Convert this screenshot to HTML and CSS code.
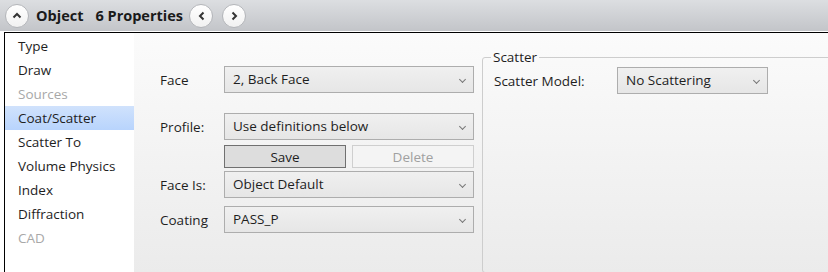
FILE: index.html
```html
<!DOCTYPE html>
<html lang="en">
<head>
  <meta charset="UTF-8" />
  <title>Object Properties</title>
  <link rel="stylesheet" href="styles.css">
</head>
<body>
  <!-- Title Bar -->
  <div class="title-bar">
    <button class="round-btn collapse-btn">
      <svg width="10" height="7" viewBox="0 0 10 7"><path d="M1.5 5.5 L5 2 L8.5 5.5" fill="none" stroke="#333" stroke-width="2"/></svg>
    </button>
    <span class="title">Object</span>
    <span class="title count">6 Properties</span>
    <button class="round-btn nav-btn">
      <svg width="7" height="10" viewBox="0 0 7 10"><path d="M5.5 1.5 L2 5 L5.5 8.5" fill="none" stroke="#333" stroke-width="2"/></svg>
    </button>
    <button class="round-btn nav-btn">
      <svg width="7" height="10" viewBox="0 0 7 10"><path d="M1.5 1.5 L5 5 L1.5 8.5" fill="none" stroke="#333" stroke-width="2"/></svg>
    </button>
  </div>

  <div class="frame">
    <!-- Page list -->
    <ul class="page-list">
      <li>Type</li>
      <li>Draw</li>
      <li class="disabled">Sources</li>
      <li class="selected">Coat/Scatter</li>
      <li>Scatter To</li>
      <li>Volume Physics</li>
      <li>Index</li>
      <li>Diffraction</li>
      <li class="disabled">CAD</li>
    </ul>

    <!-- Page content -->
    <div class="page">
      <div class="face-form">
        <div class="form-row row-face">
          <label>Face</label>
          <div class="select">2, Back Face<span class="chev"></span></div>
        </div>
        <div class="form-row row-profile">
          <label>Profile:</label>
          <div class="select">Use definitions below<span class="chev"></span></div>
        </div>
        <div class="form-row row-buttons">
          <label></label>
          <div class="btn-pair">
            <button class="btn">Save</button>
            <button class="btn" disabled>Delete</button>
          </div>
        </div>
        <div class="form-row row-faceis">
          <label>Face Is:</label>
          <div class="select">Object Default<span class="chev"></span></div>
        </div>
        <div class="form-row row-coating">
          <label>Coating</label>
          <div class="select">PASS_P<span class="chev"></span></div>
        </div>
      </div>

      <fieldset class="scatter-group">
        <legend>Scatter</legend>
        <div class="scatter-row">
          <label>Scatter Model:</label>
          <div class="select scatter-select">No Scattering<span class="chev"></span></div>
        </div>
      </fieldset>
    </div>
  </div>
</body>
</html>
```

FILE: styles.css
```css
/* Basic Reset & Font */
* {
  margin: 0;
  padding: 0;
  box-sizing: border-box;
}
body, button {
  font-family: 'Open Sans', 'Noto Sans', Arial, sans-serif;
}
body {
  width: 828px;
  height: 272px;
  overflow: hidden;
  background: #fff;
  color: #1e1e1e;
  font-size: 13.5px;
}

/* Title Bar */
.title-bar {
  height: 31px;
  display: flex;
  align-items: center;
  padding-left: 5px;
  background: linear-gradient(to bottom, #dcdee1, #c3c5c9);
}
.round-btn {
  width: 24px;
  height: 24px;
  border-radius: 50%;
  border: 1px solid #b4b6ba;
  background: linear-gradient(to bottom, #ffffff, #f1f1f1);
  display: flex;
  align-items: center;
  justify-content: center;
}
.title {
  margin-left: 7px;
  font-size: 14.5px;
  font-weight: 700;
  color: #1a1a1a;
}
.title.count {
  margin-left: 12px;
  margin-right: 6px;
}
.nav-btn + .nav-btn {
  margin-left: 9px;
}

/* Frame */
.frame {
  display: flex;
  height: 241px;
  margin: 1px 0 0 4px;
  border-top: 1px solid #000;
  border-left: 1px solid #000;
  overflow: hidden;
}

/* Page list */
.page-list {
  list-style: none;
  width: 129px;
  flex-shrink: 0;
  padding-top: 1px;
  background: #fff;
}
.page-list li {
  height: 24px;
  line-height: 24px;
  padding-left: 13px;
}
.page-list li.disabled {
  color: #a8a8a8;
}
.page-list li.selected {
  background: linear-gradient(to bottom, #d0e2fc, #b8d4fd);
}

/* Page content */
.page {
  flex: 1;
  display: flex;
  background: linear-gradient(to bottom, #fbfbfb, #ebebeb);
}
.face-form {
  width: 348px;
  padding: 33px 0 0 26px;
}
.form-row {
  display: flex;
  align-items: center;
}
.form-row label {
  width: 64px;
}
.row-profile { margin-top: 20px; }
.row-buttons { margin-top: 5px; }
.row-faceis { margin-top: 3px; }
.row-coating { margin-top: 8px; }

.select {
  position: relative;
  width: 250px;
  height: 27px;
  line-height: 25px;
  padding-left: 8px;
  border: 1px solid #adadad;
  background: linear-gradient(to bottom, #f0f0f0, #e6e6e6);
}
.chev {
  position: absolute;
  right: 8px;
  top: 10px;
  width: 5px;
  height: 5px;
  border-right: 1px solid #777;
  border-bottom: 1px solid #777;
  transform: rotate(45deg);
}

/* Buttons */
.btn-pair {
  display: flex;
  gap: 6px;
}
.btn {
  width: 122px;
  height: 23px;
  font-size: 13.5px;
  color: #1e1e1e;
  border: 1px solid #707070;
  background: #dddddd;
}
.btn:disabled {
  color: #a0a0a0;
  border-color: #cfcfcf;
  background: #f4f4f4;
}

/* Scatter group */
.scatter-group {
  flex: 1;
  margin: 15px -10px 0 0;
  padding: 1px 11px 0;
  border: 1px solid #cdcdcd;
  border-radius: 3px;
}
.scatter-group legend {
  margin-left: -3px;
  padding: 0 2px;
}
.scatter-row {
  display: flex;
  align-items: center;
}
.scatter-row label {
  width: 123px;
}
.scatter-select {
  width: 151px;
}
```
